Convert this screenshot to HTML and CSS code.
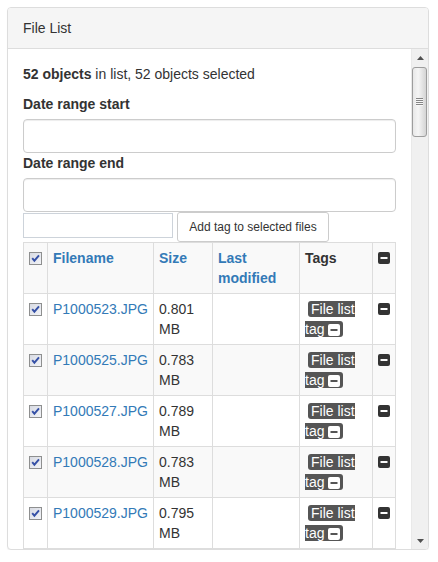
FILE: index.html
```html
<!DOCTYPE html>
<html lang="en">
<head>
<meta charset="utf-8">
<title>File List</title>
<link rel="stylesheet" href="styles.css">
</head>
<body>
<svg class="defs" width="0" height="0" aria-hidden="true">
  <defs>
    <linearGradient id="cbg" x1="0" y1="0" x2="1" y2="1">
      <stop offset="0" stop-color="#d6d9e2"/>
      <stop offset="1" stop-color="#f4f5f8"/>
    </linearGradient>
    <symbol id="i-check" viewBox="0 0 13 13">
      <rect x=".5" y=".5" width="12" height="12" fill="url(#cbg)" stroke="#8e8f8f"/>
      <path d="M3.2 6.1l2.2 2.6 4.6-5.3" fill="none" stroke="#3550a6" stroke-width="1.9"/>
    </symbol>
    <symbol id="i-minus" viewBox="0 0 12 12">
      <path fill-rule="evenodd" fill="currentColor" d="M2 0h8a2 2 0 0 1 2 2v8a2 2 0 0 1-2 2H2a2 2 0 0 1-2-2V2a2 2 0 0 1 2-2zM2.5 5v2h7V5z"/>
    </symbol>
  </defs>
</svg>

<div class="panel">
  <div class="panel-heading">File List</div>
  <div class="panel-main">
    <div class="panel-body">
      <p class="summary"><strong>52 objects</strong> in list, 52 objects selected</p>
      <div class="form-group">
        <label class="field-label" for="start">Date range start</label>
        <input id="start" class="form-control" type="text">
      </div>
      <div class="form-group">
        <label class="field-label" for="end">Date range end</label>
        <input id="end" class="form-control" type="text">
      </div>
      <div class="tag-row">
        <input class="tag-input" type="text">
        <button class="btn" type="button">Add tag to selected files</button>
      </div>
      <table class="files">
        <colgroup>
          <col class="c-check">
          <col class="c-name">
          <col class="c-size">
          <col class="c-mod">
          <col class="c-tags">
          <col>
        </colgroup>
        <tbody>
          <tr>
            <th><svg class="cb"><use href="#i-check"/></svg></th>
            <th><a href="#">Filename</a></th>
            <th><a href="#">Size</a></th>
            <th><a href="#">Last modified</a></th>
            <th>Tags</th>
            <th><svg class="minus"><use href="#i-minus"/></svg></th>
          </tr>
          <tr>
            <td><svg class="cb"><use href="#i-check"/></svg></td>
            <td><a href="#">P1000523.JPG</a></td>
            <td>0.801 MB</td>
            <td></td>
            <td><span class="tag">File list tag <svg class="tag-x"><use href="#i-minus"/></svg></span></td>
            <td><svg class="minus"><use href="#i-minus"/></svg></td>
          </tr>
          <tr>
            <td><svg class="cb"><use href="#i-check"/></svg></td>
            <td><a href="#">P1000525.JPG</a></td>
            <td>0.783 MB</td>
            <td></td>
            <td><span class="tag">File list tag <svg class="tag-x"><use href="#i-minus"/></svg></span></td>
            <td><svg class="minus"><use href="#i-minus"/></svg></td>
          </tr>
          <tr>
            <td><svg class="cb"><use href="#i-check"/></svg></td>
            <td><a href="#">P1000527.JPG</a></td>
            <td>0.789 MB</td>
            <td></td>
            <td><span class="tag">File list tag <svg class="tag-x"><use href="#i-minus"/></svg></span></td>
            <td><svg class="minus"><use href="#i-minus"/></svg></td>
          </tr>
          <tr>
            <td><svg class="cb"><use href="#i-check"/></svg></td>
            <td><a href="#">P1000528.JPG</a></td>
            <td>0.783 MB</td>
            <td></td>
            <td><span class="tag">File list tag <svg class="tag-x"><use href="#i-minus"/></svg></span></td>
            <td><svg class="minus"><use href="#i-minus"/></svg></td>
          </tr>
          <tr>
            <td><svg class="cb"><use href="#i-check"/></svg></td>
            <td><a href="#">P1000529.JPG</a></td>
            <td>0.795 MB</td>
            <td></td>
            <td><span class="tag">File list tag <svg class="tag-x"><use href="#i-minus"/></svg></span></td>
            <td><svg class="minus"><use href="#i-minus"/></svg></td>
          </tr>
        </tbody>
      </table>
    </div>
    <div class="scrollbar" aria-hidden="true">
      <div class="sb-btn"><svg width="7" height="4" viewBox="0 0 7 4"><path d="M0 4h7L3.5 0z" fill="#505050"/></svg></div>
      <div class="sb-track">
        <div class="sb-thumb">
          <svg width="7" height="8" viewBox="0 0 7 8"><path d="M0 .5h7M0 2.5h7M0 4.5h7M0 6.5h7" stroke="#858585"/><path d="M0 1.5h7M0 3.5h7M0 5.5h7M0 7.5h7" stroke="#f7f7f7"/></svg>
        </div>
      </div>
      <div class="sb-btn"><svg width="7" height="4" viewBox="0 0 7 4"><path d="M0 0h7L3.5 4z" fill="#505050"/></svg></div>
    </div>
  </div>
</div>
</body>
</html>
```

FILE: styles.css
```css
* {
  box-sizing: border-box;
}

body {
  margin: 0;
  font-family: "Liberation Sans", Arial, Helvetica, sans-serif;
  font-size: 14px;
  line-height: 20px;
  color: #333;
  background: #fff;
}

.defs {
  position: absolute;
  width: 0;
  height: 0;
  overflow: hidden;
}

a {
  color: #337ab7;
  text-decoration: none;
}

.panel {
  margin: 7px 0 0 7px;
  width: 422px;
  background: #fff;
  border: 1px solid #ddd;
  border-radius: 4px;
  box-shadow: 0 1px 1px rgba(0, 0, 0, 0.05);
  overflow: hidden;
}

.panel-heading {
  padding: 10px 15px;
  background: #f5f5f5;
  border-bottom: 1px solid #ddd;
}

.panel-main {
  display: flex;
  height: 500px;
}

.panel-body {
  flex: 1;
  min-width: 0;
  padding: 15px;
  overflow: hidden;
}

.scrollbar {
  width: 17px;
  flex: none;
  display: flex;
  flex-direction: column;
  background: #f0f0f0;
  border-left: 1px solid #e9e9e9;
}

.sb-btn {
  height: 17px;
  flex: none;
  display: flex;
  align-items: center;
  justify-content: center;
}

.sb-track {
  flex: 1;
  padding: 1px 1px 0 0;
}

.sb-thumb {
  height: 70px;
  display: flex;
  align-items: center;
  justify-content: center;
  background: linear-gradient(to right, #e7e7e7, #f5f5f5 40%, #d4d4d4);
  border: 1px solid #9d9d9d;
  border-radius: 3px;
}

.summary {
  margin: 0 0 10px;
}

.field-label {
  display: block;
  margin-bottom: 5px;
  font-weight: bold;
}

.form-control {
  display: block;
  width: 100%;
  height: 34px;
  padding: 6px 12px;
  font: inherit;
  color: #555;
  background: #fff;
  border: 1px solid #ccc;
  border-radius: 4px;
  box-shadow: inset 0 1px 1px rgba(0, 0, 0, 0.075);
}

.tag-row {
  display: flex;
  align-items: flex-start;
  gap: 4px;
}

.tag-input {
  width: 150px;
  height: 25px;
  margin-top: 1px;
  padding: 1px 2px;
  font: inherit;
  border: 1px solid #cdd3da;
  border-radius: 0;
}

.btn {
  width: 152px;
  height: 30px;
  padding: 5px 10px;
  font-family: inherit;
  font-size: 12px;
  line-height: 18px;
  color: #333;
  background: #fff;
  border: 1px solid #ccc;
  border-radius: 3px;
}

.files {
  width: 100%;
  border-collapse: collapse;
  table-layout: fixed;
  border: 1px solid #ddd;
}

.c-check { width: 24px; }
.c-name { width: 106px; }
.c-size { width: 59px; }
.c-mod { width: 87px; }
.c-tags { width: 73px; }

.files th,
.files td {
  padding: 5px;
  border: 1px solid #ddd;
  text-align: left;
  vertical-align: top;
}

.files th {
  font-weight: bold;
}

.files tr:nth-child(odd) {
  background: #f9f9f9;
}

.cb {
  display: block;
  width: 13px;
  height: 13px;
  margin-top: 4px;
}

.minus {
  display: block;
  width: 12px;
  height: 12px;
  margin-top: 4px;
  color: #333;
}

.tag {
  margin-left: 3px;
  padding: 0 3px;
  color: #fff;
  background: #555;
  border-radius: 3px;
}

.tag-x {
  width: 12px;
  height: 12px;
  vertical-align: -2px;
  color: #fff;
}
```
